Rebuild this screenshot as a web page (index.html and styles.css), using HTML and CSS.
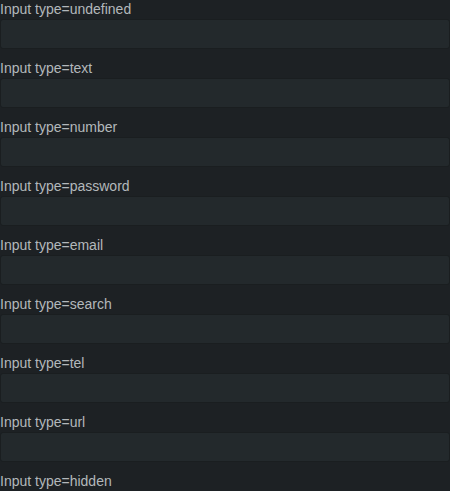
FILE: index.html
```html
<!DOCTYPE html>
<html>
<head>
<meta charset="utf-8">
<link rel="stylesheet" href="styles.css">
</head>
<body>
<div class="form">
  <div class="field"><label class="label">Input type=undefined</label><input class="input"></div>
  <div class="field"><label class="label">Input type=text</label><input class="input" type="text"></div>
  <div class="field"><label class="label">Input type=number</label><input class="input" type="number"></div>
  <div class="field"><label class="label">Input type=password</label><input class="input" type="password"></div>
  <div class="field"><label class="label">Input type=email</label><input class="input" type="email"></div>
  <div class="field"><label class="label">Input type=search</label><input class="input" type="search"></div>
  <div class="field"><label class="label">Input type=tel</label><input class="input" type="tel"></div>
  <div class="field"><label class="label">Input type=url</label><input class="input" type="url"></div>
  <div class="field"><label class="label">Input type=hidden</label><input class="input" type="hidden"></div>
</div>
</body>
</html>
```

FILE: styles.css
```css
html, body {
  margin: 0;
  padding: 0;
  background: #1d2124;
  overflow: hidden;
}
.form {
  display: flex;
  flex-direction: column;
  font-family: "Liberation Sans", Arial, sans-serif;
}
.field {
  display: flex;
  flex-direction: column;
  margin-bottom: 10px;
}
.label {
  font-size: 14px;
  line-height: 19px;
  height: 19px;
  color: #b3b8bb;
}
.input {
  box-sizing: border-box;
  height: 30px;
  width: 450px;
  margin: 0;
  border: 1px solid #1a1e20;
  border-radius: 3px;
  background: #23292c;
  color: #b3b8bb;
  outline: none;
  padding: 0 6px;
}
```
